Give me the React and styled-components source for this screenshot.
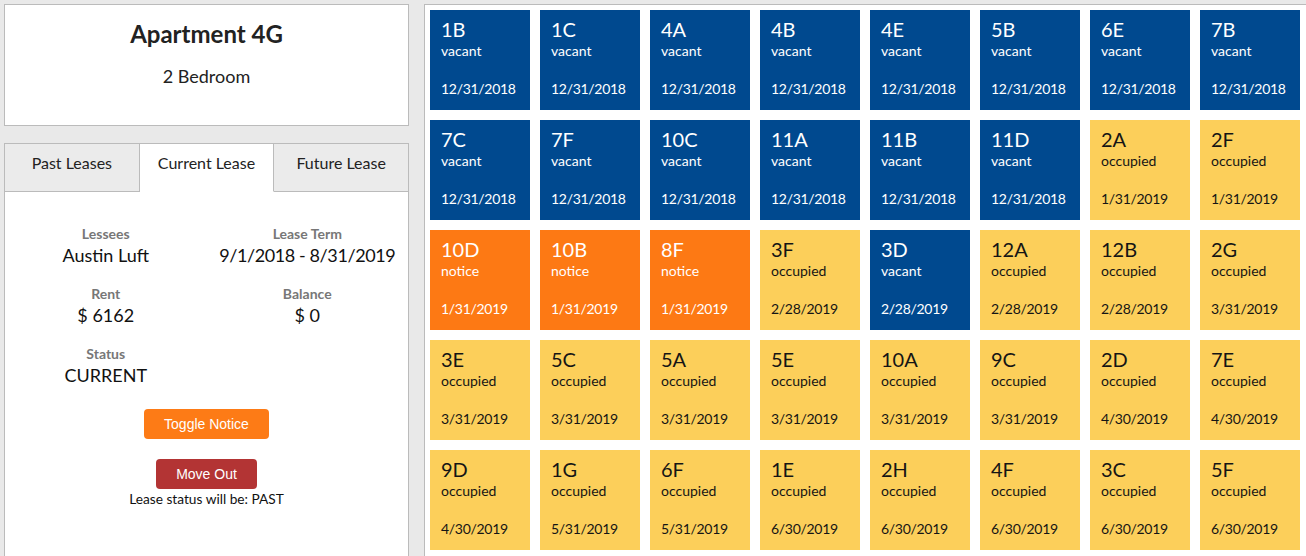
import React from "react";
import styled, { createGlobalStyle } from "styled-components";

const Global = createGlobalStyle`
  html, body { margin: 0; padding: 0; }
  body {
    background: #e9e9e9;
    font-family: Lato, "Noto Sans", sans-serif;
    color: #222;
    overflow: hidden;
  }
  * { box-sizing: border-box; }
`;

const Page = styled.div`
  display: flex;
  align-items: flex-start;
  gap: 15px;
  padding: 4px;
  width: 1306px;
  height: 556px;
  overflow: hidden;
`;

const Sidebar = styled.div`
  flex: 0 0 405px;
  display: flex;
  flex-direction: column;
  gap: 17px;
`;

const UnitCard = styled.div`
  height: 122px;
  background: #fff;
  border: 1px solid #bbb;
  text-align: center;
  padding-top: 14px;
`;

const UnitTitle = styled.h1`
  margin: 0 0 17px;
  font-size: 24px;
  font-weight: 700;
  line-height: 29px;
  color: #222;
`;

const UnitSub = styled.div`
  font-size: 18px;
  line-height: 22px;
`;

const LeaseBox = styled.div`
  display: flex;
  flex-direction: column;
`;

const TabBar = styled.div`
  display: grid;
  grid-template-columns: repeat(3, 1fr);
  border-top: 1px solid #bbb;
  border-left: 1px solid #bbb;
`;

const Tab = styled.div`
  height: 48px;
  padding-top: 9px;
  text-align: center;
  font-size: 16px;
  line-height: 20px;
  color: #222;
  background: ${(p) => (p.$active ? "#fff" : "#ebebeb")};
  border-right: 1px solid #bbb;
  border-bottom: 1px solid ${(p) => (p.$active ? "#fff" : "#bbb")};
`;

const LeaseBody = styled.div`
  background: #fff;
  border: 1px solid #bbb;
  border-top: none;
  height: 420px;
  padding-top: 32px;
  display: flex;
  flex-direction: column;
  align-items: center;
`;

const FieldGrid = styled.div`
  width: 100%;
  display: grid;
  grid-template-columns: 1fr 1fr;
  row-gap: 18px;
`;

const Field = styled.div`
  text-align: center;
`;

const FieldLabel = styled.div`
  font-size: 14px;
  font-weight: 700;
  line-height: 20px;
  color: #777;
`;

const FieldValue = styled.div`
  font-size: 18px;
  line-height: 22px;
  color: #111;
  letter-spacing: ${(p) => (p.$tight ? "-0.4px" : "0")};
`;

const Button = styled.button`
  height: 30px;
  padding: 0 20px;
  border: none;
  border-radius: 4px;
  font-family: "Liberation Sans", Arial, sans-serif;
  font-size: 14px;
  color: #fff;
  background: ${(p) => p.$bg};
  margin-top: ${(p) => p.$mt}px;
  cursor: pointer;
`;

const Hint = styled.div`
  font-size: 13.7px;
  line-height: 18px;
  color: #111;
  margin-top: 1px;
`;

const Board = styled.div`
  flex: 0 0 900px;
  height: 600px;
  background: #fff;
  border: 1px solid #bbb;
  padding: 5px;
`;

const TileGrid = styled.div`
  display: grid;
  grid-template-columns: repeat(8, 100px);
  grid-auto-rows: 100px;
  gap: 10px;
`;

const palette = {
  vacant: { bg: "#00498f", fg: "#fff" },
  notice: { bg: "#fd7914", fg: "#fff" },
  occupied: { bg: "#fccf5a", fg: "#151515" },
};

const Tile = styled.div`
  display: flex;
  flex-direction: column;
  padding: 7px 12px 13px 11px;
  background: ${(p) => palette[p.$status].bg};
  color: ${(p) => palette[p.$status].fg};
`;

const TileName = styled.div`
  font-size: 20px;
  line-height: 24px;
`;

const TileStatus = styled.div`
  font-size: 14px;
  line-height: 17px;
  margin-top: 1px;
`;

const TileDate = styled.div`
  margin-top: auto;
  font-size: 14px;
  line-height: 17px;
  letter-spacing: -0.3px;
`;

const units = [
  ["1B", "vacant", "12/31/2018"],
  ["1C", "vacant", "12/31/2018"],
  ["4A", "vacant", "12/31/2018"],
  ["4B", "vacant", "12/31/2018"],
  ["4E", "vacant", "12/31/2018"],
  ["5B", "vacant", "12/31/2018"],
  ["6E", "vacant", "12/31/2018"],
  ["7B", "vacant", "12/31/2018"],
  ["7C", "vacant", "12/31/2018"],
  ["7F", "vacant", "12/31/2018"],
  ["10C", "vacant", "12/31/2018"],
  ["11A", "vacant", "12/31/2018"],
  ["11B", "vacant", "12/31/2018"],
  ["11D", "vacant", "12/31/2018"],
  ["2A", "occupied", "1/31/2019"],
  ["2F", "occupied", "1/31/2019"],
  ["10D", "notice", "1/31/2019"],
  ["10B", "notice", "1/31/2019"],
  ["8F", "notice", "1/31/2019"],
  ["3F", "occupied", "2/28/2019"],
  ["3D", "vacant", "2/28/2019"],
  ["12A", "occupied", "2/28/2019"],
  ["12B", "occupied", "2/28/2019"],
  ["2G", "occupied", "3/31/2019"],
  ["3E", "occupied", "3/31/2019"],
  ["5C", "occupied", "3/31/2019"],
  ["5A", "occupied", "3/31/2019"],
  ["5E", "occupied", "3/31/2019"],
  ["10A", "occupied", "3/31/2019"],
  ["9C", "occupied", "3/31/2019"],
  ["2D", "occupied", "4/30/2019"],
  ["7E", "occupied", "4/30/2019"],
  ["9D", "occupied", "4/30/2019"],
  ["1G", "occupied", "5/31/2019"],
  ["6F", "occupied", "5/31/2019"],
  ["1E", "occupied", "6/30/2019"],
  ["2H", "occupied", "6/30/2019"],
  ["4F", "occupied", "6/30/2019"],
  ["3C", "occupied", "6/30/2019"],
  ["5F", "occupied", "6/30/2019"],
];

export default function App() {
  return (
    <>
      <Global />
      <Page>
        <Sidebar>
          <UnitCard>
            <UnitTitle>Apartment 4G</UnitTitle>
            <UnitSub>2 Bedroom</UnitSub>
          </UnitCard>
          <LeaseBox>
            <TabBar>
              <Tab>Past Leases</Tab>
              <Tab $active>Current Lease</Tab>
              <Tab>Future Lease</Tab>
            </TabBar>
            <LeaseBody>
              <FieldGrid>
                <Field>
                  <FieldLabel>Lessees</FieldLabel>
                  <FieldValue>Austin Luft</FieldValue>
                </Field>
                <Field>
                  <FieldLabel>Lease Term</FieldLabel>
                  <FieldValue $tight>9/1/2018 - 8/31/2019</FieldValue>
                </Field>
                <Field>
                  <FieldLabel>Rent</FieldLabel>
                  <FieldValue>$ 6162</FieldValue>
                </Field>
                <Field>
                  <FieldLabel>Balance</FieldLabel>
                  <FieldValue>$ 0</FieldValue>
                </Field>
                <Field>
                  <FieldLabel>Status</FieldLabel>
                  <FieldValue>CURRENT</FieldValue>
                </Field>
              </FieldGrid>
              <Button $bg="#fd7b16" $mt={23}>Toggle Notice</Button>
              <Button $bg="#b33434" $mt={20}>Move Out</Button>
              <Hint>Lease status will be: PAST</Hint>
            </LeaseBody>
          </LeaseBox>
        </Sidebar>
        <Board>
          <TileGrid>
            {units.map(([name, status, date]) => (
              <Tile key={name} $status={status}>
                <TileName>{name}</TileName>
                <TileStatus>{status}</TileStatus>
                <TileDate>{date}</TileDate>
              </Tile>
            ))}
          </TileGrid>
        </Board>
      </Page>
    </>
  );
}
